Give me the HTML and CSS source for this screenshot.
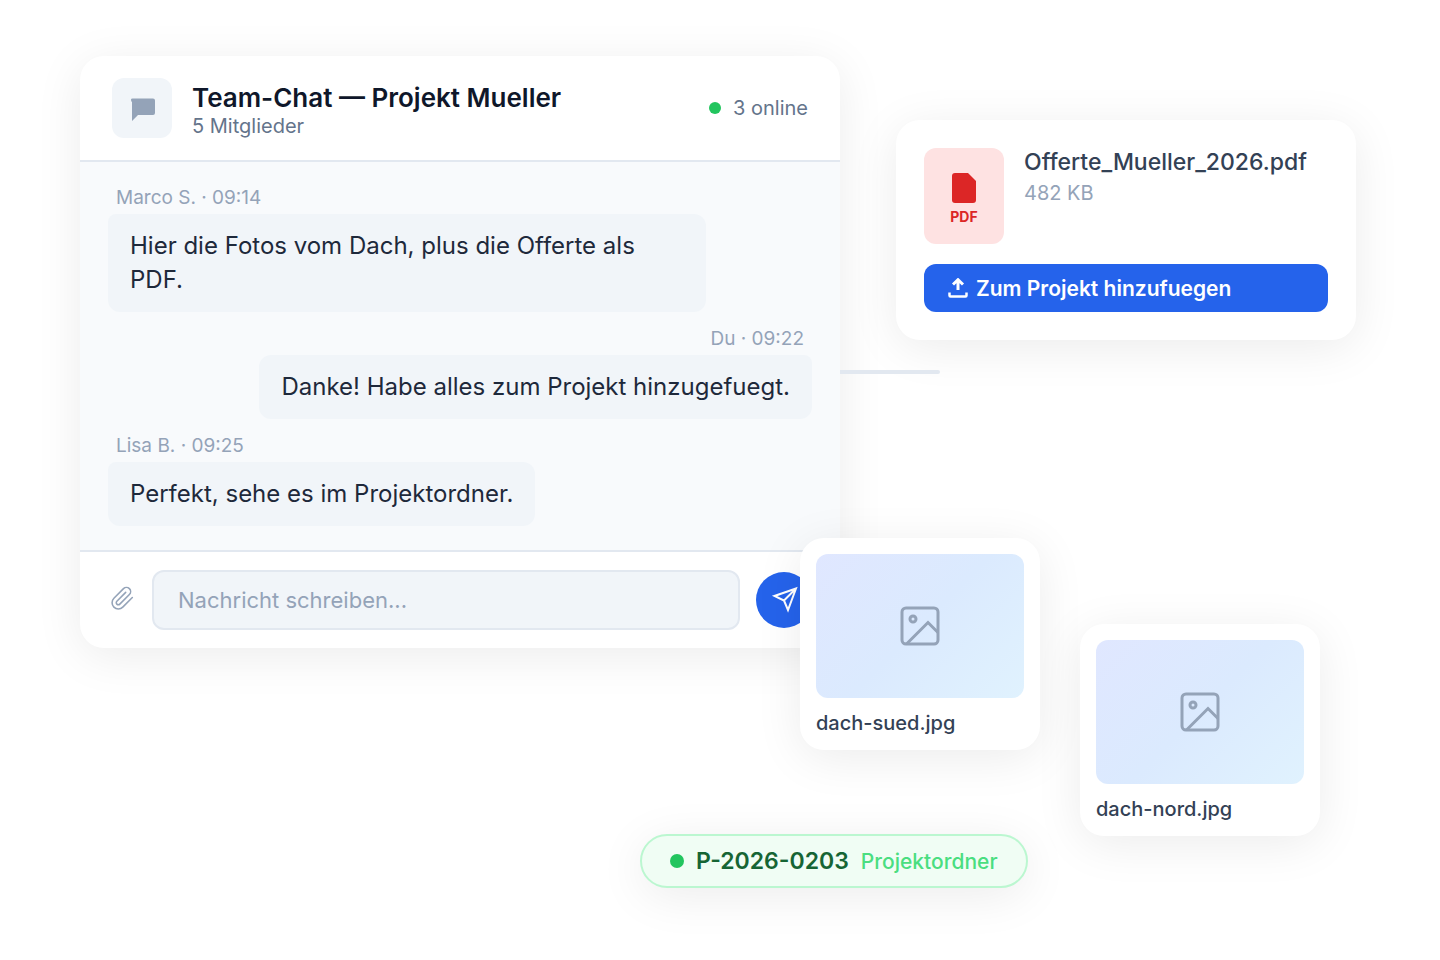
FILE: index.html
```html
<!DOCTYPE html>
<html lang="de">
  <head>
    <meta charset="UTF-8" />
    <meta name="viewport" content="width=device-width, initial-scale=1.0" />
    <title>Team-Chat</title>
    <link rel="stylesheet" href="styles.css">
  </head>

  <body>
    <main class="scene">
      <section class="card chat">
        <header class="chat-header">
          <div class="chat-icon">
            <svg width="28" height="28" viewBox="0 0 28 28" fill="#94a3b8">
              <path d="M3 5.500Q3 4.500 4.500 4.500H25Q27 4.500 27 6.500V19Q27 21 25 21H10L4 27V8Q3 7.500 3 5.500Z" />
            </svg>
          </div>
          <div class="chat-heading">
            <h1>Team-Chat — Projekt Mueller</h1>
            <p>5 Mitglieder</p>
          </div>
          <div class="online"><span class="dot"></span>3 online</div>
        </header>

        <div class="messages">
          <div class="message">
            <span class="meta">Marco S. · 09:14</span>
            <p class="bubble">Hier die Fotos vom Dach, plus die Offerte als PDF.</p>
          </div>
          <div class="message own">
            <span class="meta">Du · 09:22</span>
            <p class="bubble">Danke! Habe alles zum Projekt hinzugefuegt.</p>
          </div>
          <div class="message">
            <span class="meta">Lisa B. · 09:25</span>
            <p class="bubble">Perfekt, sehe es im Projektordner.</p>
          </div>
        </div>

        <form class="composer">
          <button type="button" class="attach" aria-label="Datei anhängen">
            <svg width="25" height="25" viewBox="0 0 24 24" fill="none" stroke="#94a3b8" stroke-width="1.500" stroke-linecap="round" stroke-linejoin="round">
              <path d="M21.440 11.050l-9.190 9.190a6 6 0 0 1-8.490-8.490l9.190-9.190a4 4 0 0 1 5.660 5.660l-9.200 9.190a2 2 0 0 1-2.830-2.830l8.490-8.480" />
            </svg>
          </button>
          <input type="text" placeholder="Nachricht schreiben..." aria-label="Nachricht" />
          <button type="button" class="send" aria-label="Senden">
            <svg width="28" height="28" viewBox="0 0 28 28" fill="none" stroke="#fff" stroke-width="2">
              <path d="M26 2.500L4.500 10L14 14.500L18 24ZM26 2.500L14 14.500" />
            </svg>
          </button>
        </form>
      </section>

      <div class="link-line"></div>

      <div class="side">
        <section class="card file">
          <div class="file-info">
            <div class="file-icon">
              <svg width="24" height="30" viewBox="0 0 24 30" fill="#dc2626">
                <path d="M3 0H16L24 8V27a3 3 0 0 1-3 3H3a3 3 0 0 1-3-3V3a3 3 0 0 1 3-3Z" />
              </svg>
              <span>PDF</span>
            </div>
            <div>
              <h2>Offerte_Mueller_2026.pdf</h2>
              <p>482 KB</p>
            </div>
          </div>
          <button type="button" class="add">
            <svg width="20" height="20" viewBox="0 0 20 20" fill="none" stroke="#fff" stroke-width="3">
              <path d="M10 12V2M5 6.500L10 1.700L15 6.500" />
              <path d="M1.500 14.500V17.500Q1.500 18.500 2.500 18.500H17.500Q18.500 18.500 18.500 17.500V14.500" stroke-width="2.500" />
            </svg>
            Zum Projekt hinzufuegen
          </button>
        </section>

        <div class="photos">
          <figure class="card photo">
            <div class="thumb">
              <svg width="40" height="40" viewBox="0 0 40 40" fill="none" stroke="#94a3b8" stroke-width="3">
                <rect x="2" y="2" width="36" height="36" rx="4" />
                <circle cx="13" cy="13" r="3" />
                <path d="M6.500 38L28 16.500L38 26.500" />
              </svg>
            </div>
            <figcaption>dach-sued.jpg</figcaption>
          </figure>
          <figure class="card photo lower">
            <div class="thumb">
              <svg width="40" height="40" viewBox="0 0 40 40" fill="none" stroke="#94a3b8" stroke-width="3">
                <rect x="2" y="2" width="36" height="36" rx="4" />
                <circle cx="13" cy="13" r="3" />
                <path d="M6.500 38L28 16.500L38 26.500" />
              </svg>
            </div>
            <figcaption>dach-nord.jpg</figcaption>
          </figure>
        </div>

        <div class="project">
          <span class="dot"></span>
          <strong>P-2026-0203</strong>
          <span class="folder">Projektordner</span>
        </div>
      </div>
    </main>
  </body>
</html>
```

FILE: styles.css
```css
* {
  box-sizing: border-box;
}

body {
  margin: 0;
  background-color: #fff;
  color: #1e293b;
  font-family: Inter, "Liberation Sans", sans-serif;
}

h1,
h2,
p,
figure {
  margin: 0;
}

button {
  border: none;
  padding: 0;
  font-family: inherit;
  cursor: pointer;
}

svg {
  display: block;
  flex-shrink: 0;
}

.scene {
  position: relative;
  display: grid;
  grid-template-columns: minmax(0, 760fr) minmax(0, 460fr);
  align-items: start;
  gap: 56px;
  padding: 56px 84px 56px 80px;
}

.card {
  background-color: #fff;
  border-radius: 24px;
  box-shadow: 0 8px 48px rgba(0, 0, 0, 0.08);
}

.dot {
  width: 12px;
  height: 12px;
  border-radius: 50%;
  background-color: #22c55e;
}

/* chat window */
.chat-header {
  display: flex;
  align-items: center;
  gap: 20px;
  padding: 22px 32px;
  border-bottom: 2px solid #e2e8f0;
}

.chat-icon {
  display: flex;
  align-items: center;
  justify-content: center;
  width: 60px;
  height: 60px;
  border-radius: 12px;
  background-color: #f1f5f9;
}

.chat-heading {
  flex: 1;
}

.chat-heading h1 {
  padding-top: 4px;
  color: #0f172a;
  font-size: 26px;
  font-weight: 600;
  line-height: 32px;
}

.chat-heading p {
  color: #64748b;
  font-size: 20px;
  line-height: 24px;
}

.online {
  display: flex;
  align-items: center;
  gap: 12px;
  color: #64748b;
  font-size: 20px;
}

.messages {
  display: flex;
  flex-direction: column;
  gap: 16px;
  padding: 25px 28px 24px;
  background-color: #f8fafc;
}

.message {
  display: flex;
  flex-direction: column;
  align-items: flex-start;
  gap: 5px;
}

.own {
  align-items: flex-end;
}

.meta {
  padding: 0 8px;
  color: #94a3b8;
  font-size: 19px;
  line-height: 22px;
}

.bubble {
  max-width: 85%;
  padding: 15px 22px;
  border-radius: 8px 12px 12px 12px;
  background-color: #f1f5f9;
  font-size: 24px;
  line-height: 34px;
}

.own .bubble {
  border-radius: 12px 8px 12px 12px;
}

.composer {
  display: flex;
  align-items: center;
  gap: 16px;
  padding: 18px 28px;
  border-top: 2px solid #e2e8f0;
}

.attach {
  display: flex;
  justify-content: center;
  align-items: flex-start;
  width: 28px;
  height: 28px;
  background: none;
}

.composer input {
  flex: 1;
  min-width: 0;
  height: 60px;
  padding: 0 24px;
  border: 2px solid #e2e8f0;
  border-radius: 12px;
  background-color: #f1f5f9;
  font-family: inherit;
  font-size: 22px;
}

.composer input::placeholder {
  color: #94a3b8;
}

.send {
  display: flex;
  align-items: center;
  justify-content: center;
  width: 56px;
  height: 56px;
  border-radius: 50%;
  background-color: #2563eb;
}

.link-line {
  position: absolute;
  top: 370px;
  right: 500px;
  width: 100px;
  height: 4px;
  border-radius: 0 2px 2px 0;
  background-color: #e2e8f0;
}

/* file card, photos and project tag */
.side {
  display: flex;
  flex-direction: column;
  align-items: flex-start;
  padding-top: 64px;
}

.file {
  align-self: stretch;
  padding: 28px;
}

.file-info {
  display: flex;
  gap: 20px;
  margin-bottom: 20px;
}

.file-icon {
  display: flex;
  flex-direction: column;
  align-items: center;
  justify-content: center;
  gap: 5px;
  width: 80px;
  height: 96px;
  padding-top: 5px;
  border-radius: 12px;
  background-color: #fee2e2;
  color: #dc2626;
  font-size: 14px;
  font-weight: 700;
}

.file-info h2 {
  color: #334155;
  font-size: 23px;
  font-weight: 500;
  line-height: 28px;
}

.file-info p {
  margin-top: 4px;
  color: #94a3b8;
  font-size: 20px;
  line-height: 26px;
}

.add {
  display: flex;
  align-items: center;
  gap: 8px;
  width: 100%;
  height: 48px;
  padding: 0 24px;
  border-radius: 12px;
  background-color: #2563eb;
  color: #fff;
  font-size: 21px;
  font-weight: 600;
}

.photos {
  display: flex;
  align-items: flex-start;
  gap: 40px;
  margin: 198px 0 0 -96px;
}

.photo {
  width: 240px;
  padding: 16px 16px 14px;
}

.lower {
  margin-top: 86px;
}

.thumb {
  display: flex;
  align-items: center;
  justify-content: center;
  height: 144px;
  border-radius: 12px;
  background: linear-gradient(135deg, #e0e7ff, #dbeafe 50%, #e0f2fe);
}

.photo figcaption {
  margin-top: 12px;
  color: #334155;
  font-size: 20px;
  font-weight: 500;
  line-height: 26px;
}

.project {
  display: flex;
  align-items: center;
  gap: 12px;
  height: 54px;
  margin: -2px 0 0 -256px;
  padding: 0 28px;
  border: 2px solid #bbf7d0;
  border-radius: 27px;
  background-color: #f0fdf4;
  box-shadow: 0 8px 48px rgba(0, 0, 0, 0.08);
}

.project .dot {
  width: 14px;
  height: 14px;
}

.project strong {
  color: #166534;
  font-size: 23px;
  font-weight: 600;
}

.folder {
  color: #4ade80;
  font-size: 21px;
  font-weight: 500;
}
```
